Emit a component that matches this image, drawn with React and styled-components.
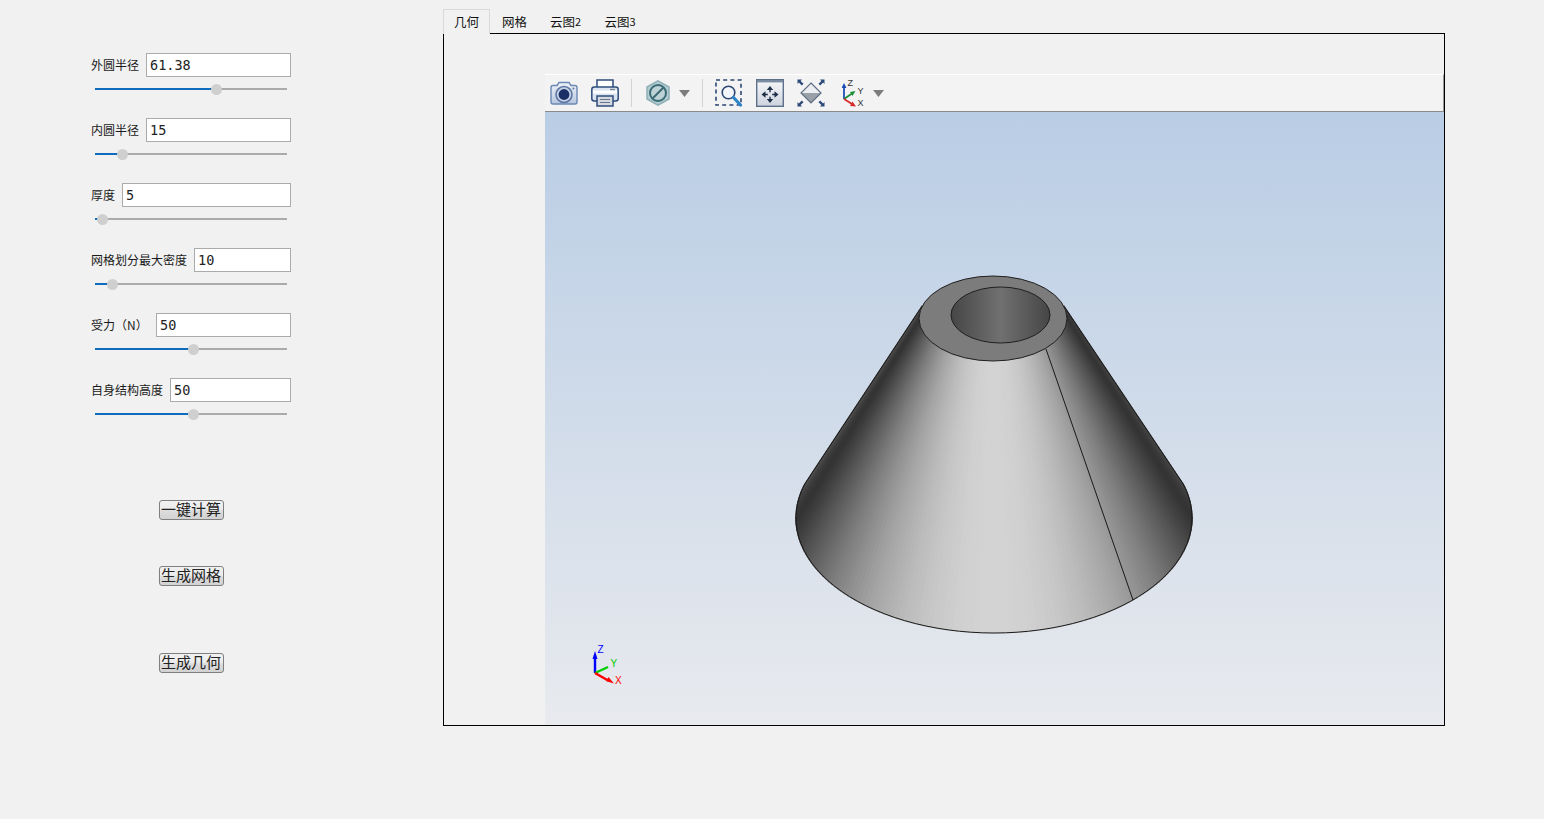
import React from "react";
import styled, { createGlobalStyle } from "styled-components";

const Global = createGlobalStyle`
  html, body { margin: 0; padding: 0; height: 100%; overflow: hidden; background: #f1f1f1; }
  body { font-family: "Noto Sans CJK SC", "Liberation Sans", sans-serif; color: #1a1a1a; }
`;

const Page = styled.div`
  display: flex;
  width: 1544px;
  height: 819px;
`;

const Sidebar = styled.aside`
  box-sizing: border-box;
  width: 443px;
  padding: 53px 0 0 91px;
  display: flex;
  flex-direction: column;
`;

const Controls = styled.div`
  width: 200px;
  display: flex;
  flex-direction: column;
`;

const Group = styled.div`
  height: 65px;
`;

const FieldRow = styled.label`
  display: flex;
  align-items: center;
  gap: 7px;
  height: 24px;
`;

const FieldLabel = styled.span`
  font-size: 12px;
  line-height: 24px;
  white-space: nowrap;
  ${(p) => (p.$width ? `width: ${p.$width}px;` : "")}
`;

const FieldInput = styled.input`
  flex: 1;
  min-width: 0;
  box-sizing: border-box;
  height: 24px;
  padding: 0 0 0 3px;
  border: 1px solid #ababab;
  border-radius: 0;
  background: #fff;
  color: #222;
  font-family: "DejaVu Sans Mono", monospace;
  font-size: 13.5px;
  outline: none;
`;

const Slider = styled.div`
  position: relative;
  margin: 11px 0 0 4px;
  width: 192px;
  height: 2px;
  background: #ababab;
`;

const SliderFill = styled.div`
  height: 100%;
  background: #0f6cbd;
`;

const SliderThumb = styled.div`
  position: absolute;
  top: -4px;
  width: 11px;
  height: 11px;
  margin-left: -5px;
  border-radius: 50%;
  background: #cfcfcf;
`;

const Actions = styled.div`
  display: flex;
  flex-direction: column;
  align-items: center;
  width: 200px;
  margin-top: 57px;
`;

const ActionButton = styled.button`
  box-sizing: border-box;
  width: 65px;
  height: 20px;
  margin-top: ${(p) => p.$top}px;
  padding: 0 0 4px;
  border: 1px solid #7f7f7f;
  border-radius: 3px;
  background: linear-gradient(#f1f1f1 0%, #ececec 45%, #dcdcdc 55%, #d2d2d2 100%);
  color: #222;
  font-family: "Noto Sans CJK SC", sans-serif;
  font-size: 15px;
  line-height: 15px;
  white-space: nowrap;
`;

const Main = styled.main`
  width: 1002px;
  padding-top: 9px;
  display: flex;
  flex-direction: column;
`;

const Tabs = styled.div`
  display: flex;
  height: 24px;
`;

const Tab = styled.div`
  position: relative;
  z-index: 1;
  box-sizing: border-box;
  height: ${(p) => (p.$active ? 25 : 24)}px;
  width: ${(p) => p.$w}px;
  display: flex;
  justify-content: center;
  align-items: center;
  padding-bottom: ${(p) => (p.$active ? 1 : 0)}px;
  font-size: 12.5px;
  color: #111;
  background: ${(p) => (p.$active ? "#f1f1f1" : "transparent")};
  border: ${(p) => (p.$active ? "1px solid #d9d9d9" : "none")};
  border-bottom: none;
  margin-right: ${(p) => p.$mr || 0}px;
`;

const Digit = styled.span`
  font-size: 11px;
`;

const Panel = styled.div`
  box-sizing: border-box;
  height: 693px;
  border: 1px solid #000;
  padding: 40px 0 0 101px;
  display: flex;
`;

const Viewer = styled.div`
  flex: 1;
  display: flex;
  flex-direction: column;
`;

const Toolbar = styled.div`
  box-sizing: border-box;
  width: 899px;
  height: 38px;
  display: flex;
  align-items: center;
  background: #f3f3f3;
  border-top: 1px solid #fff;
  border-right: 1px solid #9a9a9a;
  border-bottom: 1px solid #8a8a8a;
`;

const ToolIcon = styled.svg`
  display: block;
  flex: none;
  margin-left: ${(p) => p.$ml || 0}px;
`;

const Separator = styled.div`
  width: 1px;
  height: 28px;
  background: #d2d2d2;
  margin-left: ${(p) => p.$ml}px;
`;

const Viewport = styled.div`
  flex: 1;
  background: linear-gradient(#b9cde5 0%, #e8eaee 100%);
`;

const Scene = styled.svg`
  display: block;
  width: 100%;
  height: 100%;
`;

const fields = [
  { label: "外圆半径", value: "61.38", thumb: 216 },
  { label: "内圆半径", value: "15", thumb: 122 },
  { label: "厚度", value: "5", thumb: 102 },
  { label: "网格划分最大密度", value: "10", thumb: 112 },
  { label: "受力（N）", value: "50", thumb: 193, width: 58 },
  { label: "自身结构高度", value: "50", thumb: 193 },
];

const Caret = ({ ml }) => (
  <ToolIcon $ml={ml} width="11" height="7" viewBox="0 0 11 7">
    <path d="M0 0H11L5.5 7Z" fill="#7d7d7d" />
  </ToolIcon>
);

const CameraIcon = () => (
  <ToolIcon $ml={5} width="28" height="24" viewBox="0 0 28 24">
    <defs>
      <linearGradient id="camBody" x1="0" y1="0" x2="0" y2="1">
        <stop offset="0" stopColor="#eef2f8" />
        <stop offset="1" stopColor="#b7c7df" />
      </linearGradient>
    </defs>
    <path d="M1 6.5Q1 4.5 3 4.5H7L9 1.5H19L21 4.5H25Q27 4.5 27 6.5V21Q27 23 25 23H3Q1 23 1 21Z" fill="url(#camBody)" stroke="#6b87b3" strokeWidth="1.4" />
    <circle cx="14" cy="13.5" r="8" fill="#c6d2e6" stroke="#5f77a3" strokeWidth="1.6" />
    <circle cx="14" cy="13.5" r="5.4" fill="#1a2f66" />
    <circle cx="23.5" cy="7.5" r="1" fill="#5f77a3" />
  </ToolIcon>
);

const PrinterIcon = () => (
  <ToolIcon $ml={13} width="28" height="28" viewBox="0 0 28 28">
    <path d="M6 9V1H22V9" fill="#fff" stroke="#2f4d7c" strokeWidth="1.5" />
    <rect x="0.8" y="8" width="26.4" height="14" rx="2.5" fill="#dbe4f0" stroke="#2f4d7c" strokeWidth="1.5" />
    <rect x="2" y="11.5" width="24" height="3" fill="#fff" />
    <rect x="19" y="9.8" width="5" height="1.4" fill="#7b8794" />
    <rect x="6" y="17" width="16" height="10" fill="#d5d9df" stroke="#2f4d7c" strokeWidth="1.5" />
    <path d="M9 20.5H19M9 23.5H19" stroke="#67788f" strokeWidth="1.2" />
  </ToolIcon>
);

const HexIcon = () => (
  <ToolIcon $ml={14} width="24" height="26" viewBox="0 0 24 26">
    <path d="M12 .8L23 7V19L12 25.2L1 19V7Z" fill="#b4cdd2" stroke="#8fb0b6" strokeWidth="1.5" />
    <circle cx="12" cy="13" r="8" fill="#bcd2d6" stroke="#3a6a73" strokeWidth="2" />
    <path d="M6.5 18.5L17.5 7.5" stroke="#3a6a73" strokeWidth="2" />
  </ToolIcon>
);

const ZoomBoxIcon = () => (
  <ToolIcon $ml={12} width="28" height="28" viewBox="0 0 28 28">
    <rect x="1" y="1" width="25" height="25" fill="none" stroke="#2c4773" strokeWidth="1.6" strokeDasharray="4 3.2" />
    <circle cx="13.5" cy="13.5" r="6.3" fill="#f2f6fb" stroke="#2c4773" strokeWidth="1.6" />
    <path d="M18.5 18.5L25.5 26" stroke="#2b84c6" strokeWidth="3.2" strokeLinecap="round" />
  </ToolIcon>
);

const FitIcon = () => (
  <ToolIcon $ml={13} width="28" height="28" viewBox="0 0 28 28">
    <defs>
      <linearGradient id="fitFill" x1="0" y1="0" x2="0" y2="1">
        <stop offset="0" stopColor="#f6f7f9" />
        <stop offset="1" stopColor="#cdd3de" />
      </linearGradient>
    </defs>
    <rect x="0.7" y="0.7" width="26.6" height="26.6" fill="url(#fitFill)" stroke="#5d7089" strokeWidth="1.4" />
    <rect x="1" y="1" width="26" height="2.4" fill="#7a8aa0" />
    <path d="M14 10V21M8.5 15.5H19.5" stroke="#1f2f48" strokeWidth="1.4" />
    <rect x="11.8" y="13.3" width="4.4" height="4.4" fill="#e2e5eb" />
    <path d="M14 7L10.8 11H17.2ZM14 24L10.8 20H17.2ZM5.5 15.5L9.5 12.3V18.7ZM22.5 15.5L18.5 12.3V18.7Z" fill="#1f2f48" />
  </ToolIcon>
);

const DiamondIcon = () => (
  <ToolIcon $ml={13} width="28" height="28" viewBox="0 0 28 28">
    <path d="M14 4L24 14H4Z" fill="#eceef1" />
    <path d="M4 14H24L14 24Z" fill="#9aa0a8" />
    <path d="M14 4L24 14L14 24L4 14Z" fill="none" stroke="#5f6d80" strokeWidth="1.2" />
    <path d="M.5 .5H5L3.6 1.9L6.5 4.8L4.8 6.5L1.9 3.6L.5 5Z" fill="#2c4a78" />
    <path d="M27.5 .5H23L24.4 1.9L21.5 4.8L23.2 6.5L26.1 3.6L27.5 5Z" fill="#2c4a78" />
    <path d="M.5 27.5H5L3.6 26.1L6.5 23.2L4.8 21.5L1.9 24.4L.5 23Z" fill="#2c4a78" />
    <path d="M27.5 27.5H23L24.4 26.1L21.5 23.2L23.2 21.5L26.1 24.4L27.5 23Z" fill="#2c4a78" />
  </ToolIcon>
);

const AxesIcon = () => (
  <ToolIcon $ml={17} width="24" height="30" viewBox="0 0 24 30">
    <path d="M2 21V9" stroke="#1f4fb5" strokeWidth="1.8" />
    <path d="M2 5L-.5 10H4.5Z" fill="#1f4fb5" />
    <path d="M2 21L10 15.5" stroke="#1e8f3a" strokeWidth="1.8" />
    <path d="M13.5 13L8 14L10.5 18Z" fill="#1e8f3a" />
    <path d="M2 21L10 26" stroke="#d92b2b" strokeWidth="1.8" />
    <path d="M14 28.5L8 28L10.5 23.5Z" fill="#d92b2b" />
    <text x="5.5" y="8" fontFamily="Liberation Sans" fontSize="9" fill="#333">Z</text>
    <text x="15.5" y="15.5" fontFamily="Liberation Sans" fontSize="9" fill="#333">Y</text>
    <text x="15.5" y="28" fontFamily="Liberation Sans" fontSize="9" fill="#333">X</text>
  </ToolIcon>
);

const TOP = { cx: 993, cy: 318.5, rx: 74, ry: 42.5 };
const BOT = { cx: 994, cy: 518, rx: 198, ry: 115 };

const strips = (() => {
  const out = [];
  const start = -0.3;
  const end = Math.PI + 0.3;
  const n = 140;
  const pt = (e, a) => [e.cx + e.rx * Math.cos(a), e.cy + e.ry * Math.sin(a)];
  for (let i = 0; i < n; i++) {
    const a = start + ((end - start) * i) / n;
    const b = start + ((end - start) * (i + 1)) / n;
    const mid = (a + b) / 2;
    const x = Math.cos(mid);
    const f = Math.max(0, 1 - x * x);
    const v = Math.round(52 + 159 * Math.pow(f, 0.7));
    const [x1, y1] = pt(TOP, a);
    const [x2, y2] = pt(TOP, b);
    const [x3, y3] = pt(BOT, b);
    const [x4, y4] = pt(BOT, a);
    out.push({
      d: `M${x1.toFixed(2)} ${y1.toFixed(2)}L${x2.toFixed(2)} ${y2.toFixed(2)}L${x3.toFixed(2)} ${y3.toFixed(2)}L${x4.toFixed(2)} ${y4.toFixed(2)}Z`,
      c: `rgb(${v},${v},${v})`,
    });
  }
  return out;
})();

const outline = (() => {
  const a = -0.3;
  const tx = (e, t) => e.cx + e.rx * Math.cos(t);
  const ty = (e, t) => e.cy + e.ry * Math.sin(t);
  return `M${tx(TOP, a)} ${ty(TOP, a)}L${tx(BOT, a)} ${ty(BOT, a)}A${BOT.rx} ${BOT.ry} 0 1 1 ${tx(BOT, Math.PI - a)} ${ty(BOT, Math.PI - a)}L${tx(TOP, Math.PI - a)} ${ty(TOP, Math.PI - a)}`;
})();

const ConeScene = () => (
  <Scene viewBox="545 112 899 613" preserveAspectRatio="none">
    <defs>
      <linearGradient id="holeShade" x1="0" y1="0" x2="1" y2="0">
        <stop offset="0" stopColor="#464646" />
        <stop offset="0.5" stopColor="#707070" />
        <stop offset="1" stopColor="#464646" />
      </linearGradient>
    </defs>
    {strips.map((s, i) => (
      <path key={i} d={s.d} fill={s.c} stroke={s.c} strokeWidth="1.4" />
    ))}
    <path d={outline} fill="none" stroke="#1a1a1a" strokeWidth="1" />
    <path d="M1046 349L1133 600" stroke="#1a1a1a" strokeWidth="1" />
    <ellipse cx={TOP.cx} cy={TOP.cy} rx={TOP.rx} ry={TOP.ry} fill="#7c7c7c" stroke="#1f1f1f" strokeWidth="1" />
    <ellipse cx="1000.5" cy="315" rx="49.5" ry="28" fill="url(#holeShade)" stroke="#1f1f1f" strokeWidth="1" />

    <path d="M595 673V657" stroke="#0000ff" strokeWidth="2.4" />
    <path d="M595 651L592.5 659H597.5Z" fill="#0000ff" />
    <path d="M595 673L608 667" stroke="#00d000" strokeWidth="2.4" />
    <path d="M595 673L609 681" stroke="#ff0000" strokeWidth="2.4" />
    <path d="M614 683.5L606 681L608.5 677Z" fill="#ff0000" />
    <text x="597.5" y="653" fontFamily="Liberation Sans" fontSize="10" fill="#0000ff">Z</text>
    <text x="610.5" y="667" fontFamily="Liberation Sans" fontSize="10" fill="#00c800">Y</text>
    <text x="615" y="684" fontFamily="Liberation Sans" fontSize="10" fill="#ff0000">X</text>
  </Scene>
);

export default function App() {
  return (
    <Page>
      <Global />
      <Sidebar>
        <Controls>
          {fields.map((f) => {
            const pct = ((f.thumb - 95) / 192) * 100;
            return (
              <Group key={f.label}>
                <FieldRow>
                  <FieldLabel $width={f.width}>{f.label}</FieldLabel>
                  <FieldInput readOnly defaultValue={f.value} />
                </FieldRow>
                <Slider>
                  <SliderFill style={{ width: `${pct}%` }} />
                  <SliderThumb style={{ left: `${pct}%` }} />
                </Slider>
              </Group>
            );
          })}
        </Controls>
        <Actions>
          <ActionButton $top={0}>一键计算</ActionButton>
          <ActionButton $top={46}>生成网格</ActionButton>
          <ActionButton $top={67}>生成几何</ActionButton>
        </Actions>
      </Sidebar>
      <Main>
        <Tabs>
          <Tab $active $w={47} $mr={1}>几何</Tab>
          <Tab $w={47} $mr={1}>网格</Tab>
          <Tab $w={53} $mr={1}>云图<Digit>2</Digit></Tab>
          <Tab $w={54}>云图<Digit>3</Digit></Tab>
        </Tabs>
        <Panel>
          <Viewer>
            <Toolbar>
              <CameraIcon />
              <PrinterIcon />
              <Separator $ml={12} />
              <HexIcon />
              <Caret ml={9} />
              <Separator $ml={12} />
              <ZoomBoxIcon />
              <FitIcon />
              <DiamondIcon />
              <AxesIcon />
              <Caret ml={7} />
            </Toolbar>
            <Viewport>
              <ConeScene />
            </Viewport>
          </Viewer>
        </Panel>
      </Main>
    </Page>
  );
}
